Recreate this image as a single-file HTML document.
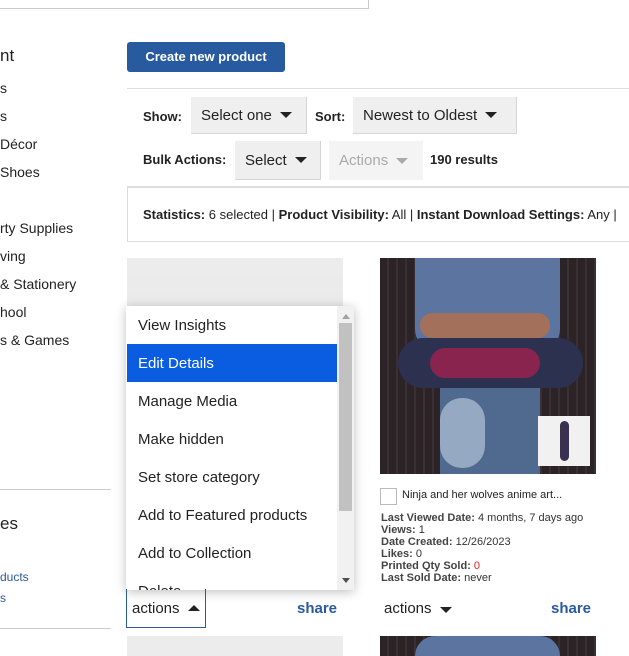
<!DOCTYPE html>
<html><head><meta charset="utf-8"><style>
*{margin:0;padding:0;box-sizing:border-box}
body{width:629px;height:655px;overflow:hidden;background:#fff;font-family:"Liberation Sans",Arial,sans-serif;color:#222;position:relative}
.a{position:absolute;white-space:nowrap}
.side{font-size:14px;color:#222}
.sel{position:absolute;background:#efefef;border-bottom:1px solid #d6d6d6;border-right:1px solid #d6d6d6;font-size:15px;color:#222;padding-left:10px;display:flex;align-items:center;white-space:nowrap}
.tri{display:inline-block;width:0;height:0;border-left:6px solid transparent;border-right:6px solid transparent;border-top:6px solid #222;margin-left:8px}
.lbl{font-size:13px;font-weight:bold}
.mi{position:absolute;left:127px;width:210px;height:38px;font-size:15px;padding-left:11px;line-height:40px;color:#222;white-space:nowrap}
.st{font-size:11px;line-height:12px;color:#333}
.st b{color:#444}
</style></head><body>
<div class="a" style="left:0;top:-2px;width:369px;height:11px;border:1px solid #ccc;border-top:none;border-left:none"></div>

<div class="a side" style="left:0;top:46px;font-size:17px">nt</div>
<div class="a side" style="left:0;top:80px">s</div>
<div class="a side" style="left:0;top:108px">s</div>
<div class="a side" style="left:0;top:136px">Décor</div>
<div class="a side" style="left:0;top:164px">Shoes</div>
<div class="a side" style="left:0;top:220px">rty Supplies</div>
<div class="a side" style="left:0;top:248px">ving</div>
<div class="a side" style="left:0;top:276px">&amp; Stationery</div>
<div class="a side" style="left:0;top:304px">hool</div>
<div class="a side" style="left:0;top:332px">s &amp; Games</div>
<div class="a" style="left:0;top:489px;width:111px;border-top:1px solid #ccc"></div>
<div class="a side" style="left:0;top:514px;font-size:17px">es</div>
<div class="a side" style="left:0;top:570px;font-size:12px;color:#2a5a9a">ducts</div>
<div class="a side" style="left:0;top:591px;font-size:12px;color:#2a5a9a">s</div>
<div class="a" style="left:0;top:628px;width:111px;border-top:1px solid #ccc"></div>

<div class="a" style="left:127px;top:42px;width:158px;height:30px;background:#275a9e;border-radius:3px;color:#fff;font-weight:bold;font-size:13px;text-align:center;line-height:30px">Create new product</div>
<div class="a" style="left:127px;top:88px;width:502px;border-top:1px solid #ddd"></div>

<div class="a lbl" style="left:143px;top:109px">Show:</div>
<div class="sel" style="left:191px;top:97px;width:116px;height:37px">Select one<span class="tri"></span></div>
<div class="a lbl" style="left:315px;top:109px">Sort:</div>
<div class="sel" style="left:353px;top:97px;width:164px;height:37px">Newest to Oldest<span class="tri"></span></div>
<div class="a lbl" style="left:143px;top:152px">Bulk Actions:</div>
<div class="sel" style="left:235px;top:141px;width:86px;height:39px">Select<span class="tri"></span></div>
<div class="sel" style="left:329px;top:141px;width:94px;height:39px;background:#f4f4f4;border:none;color:#aaa">Actions<span class="tri" style="border-top-color:#aaa"></span></div>
<div class="a lbl" style="left:430px;top:152px">190 results</div>
<div class="a" style="left:127px;top:186px;width:510px;height:56px;border:1px solid #ddd;border-top:2px solid #ddd"></div>
<div class="a" style="left:143px;top:207px;font-size:13px"><b>Statistics:</b> 6 selected | <b>Product Visibility:</b> All | <b>Instant Download Settings:</b> Any |</div>

<div class="a" style="left:127px;top:258px;width:216px;height:216px;background:linear-gradient(#ececec,#e4e4e4)"></div>
<div class="a" style="left:127px;top:636px;width:216px;height:20px;background:#ececec"></div>

<div class="a" style="left:126px;top:306px;width:228px;height:284px;background:#fff;box-shadow:0 2px 10px rgba(0,0,0,.25)"></div>
<div class="mi" style="top:306px">View Insights</div>
<div class="mi" style="top:344px;background:#0a5ce0;color:#fff">Edit Details</div>
<div class="mi" style="top:382px">Manage Media</div>
<div class="mi" style="top:420px">Make hidden</div>
<div class="mi" style="top:458px">Set store category</div>
<div class="mi" style="top:496px">Add to Featured products</div>
<div class="mi" style="top:534px">Add to Collection</div>
<div class="a" style="left:127px;top:572px;width:210px;height:18px;overflow:hidden;font-size:15px;padding-left:11px;line-height:40px">Delete</div>
<div class="a" style="left:337px;top:306px;width:17px;height:284px;background:#f1f1f1"></div>
<div class="a" style="left:339px;top:323px;width:13px;height:188px;background:#c1c1c1"></div>
<div class="a" style="left:342px;top:314px;border-left:4px solid transparent;border-right:4px solid transparent;border-bottom:5px solid #a3a3a3"></div>
<div class="a" style="left:342px;top:578px;border-left:4px solid transparent;border-right:4px solid transparent;border-top:5px solid #505050"></div>

<div class="a" style="left:126px;top:589px;width:80px;height:39px;border:1px solid #2a5a9a;border-top:none;font-size:15px;padding-left:5px;line-height:40px">actions<span class="tri" style="border-top:none;border-bottom:6px solid #222;vertical-align:middle;margin-bottom:3px"></span></div>
<div class="a" style="left:297px;top:600px;font-size:15px;font-weight:bold;color:#2a5a9a">share</div>

<div class="a" style="left:380px;top:258px;width:216px;height:216px;overflow:hidden;background:repeating-linear-gradient(90deg,#2b2326 0 7px,#3a3034 7px 9px)">
 <div class="a" style="left:35px;top:0;width:145px;height:100px;background:#5b74a0;border-radius:0 0 30px 30px"></div>
 <div class="a" style="left:40px;top:55px;width:130px;height:25px;background:#a3705c;border-radius:12px"></div>
 <div class="a" style="left:18px;top:80px;width:185px;height:50px;background:#2c3150;border-radius:25px"></div>
 <div class="a" style="left:50px;top:90px;width:110px;height:30px;background:#a8204f;border-radius:15px;opacity:.75"></div>
 <div class="a" style="left:60px;top:130px;width:100px;height:90px;background:#4f6a8e"></div>
 <div class="a" style="left:60px;top:140px;width:45px;height:70px;background:#95a9c2;border-radius:22px"></div>
 <div class="a" style="left:158px;top:158px;width:52px;height:50px;background:#f1f1f1"></div>
 <div class="a" style="left:180px;top:163px;width:9px;height:40px;background:#3a3050;border-radius:5px"></div>
</div>
<div class="a" style="left:380px;top:488px;width:17px;height:17px;border:1px solid #bbb"></div>
<div class="a" style="left:402px;top:489px;font-size:11px">Ninja and her wolves anime art...</div>
<div class="a st" style="left:381px;top:512px"><b>Last Viewed Date:</b> 4 months, 7 days ago<br><b>Views:</b> 1<br><b>Date Created:</b> 12/26/2023<br><b>Likes:</b> 0<br><b>Printed Qty Sold:</b> <span style="color:#d22">0</span><br><b>Last Sold Date:</b> never</div>
<div class="a" style="left:384px;top:600px;font-size:15px">actions<span class="tri"></span></div>
<div class="a" style="left:551px;top:600px;font-size:15px;font-weight:bold;color:#2a5a9a">share</div>
<div class="a" style="left:380px;top:636px;width:216px;height:20px;background:repeating-linear-gradient(90deg,#2b2326 0 7px,#3a3034 7px 9px)"><div class="a" style="left:35px;top:0;width:145px;height:20px;background:#5b74a0;border-radius:20px 20px 0 0"></div></div>
</body></html>
